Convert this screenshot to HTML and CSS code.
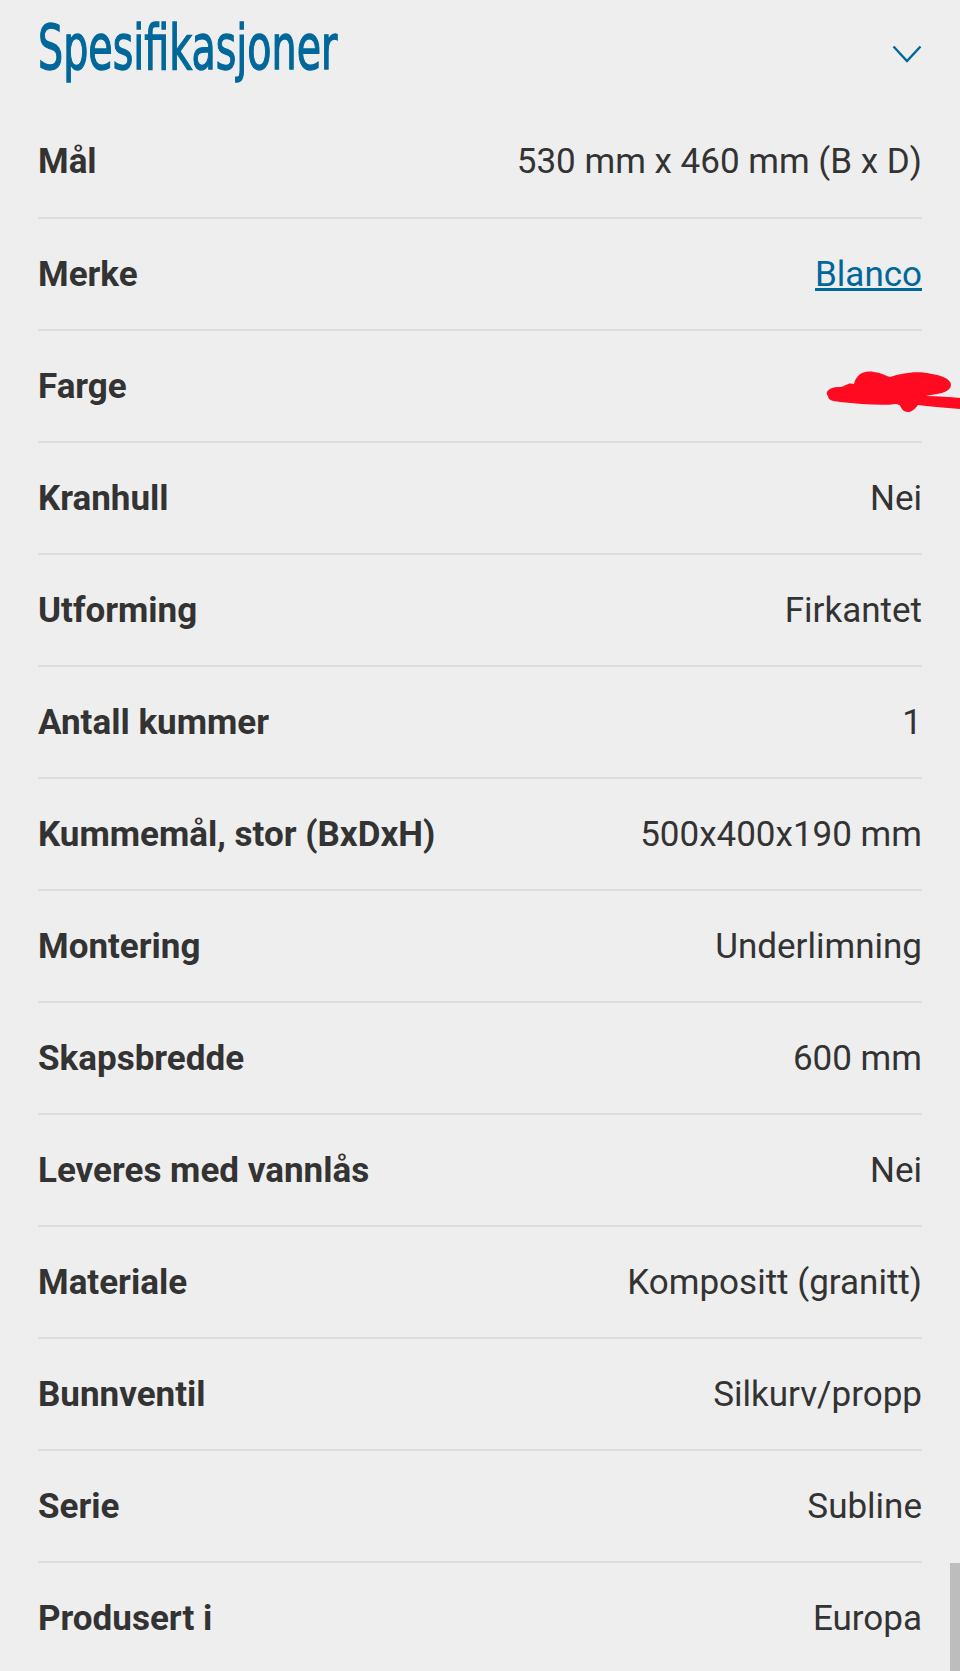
FILE: index.html
```html
<!DOCTYPE html>
<html lang="no">
<head>
    <meta charset="utf-8">
    <title>Spesifikasjoner</title>
    <link rel="stylesheet" href="styles.css">
</head>
<body>
    <div class="specs">
        <div class="specs-header">
            <h2 class="specs-title"><span>Spesifikasjoner</span></h2>
            <svg class="chevron" width="30" height="18" viewBox="0 0 30 18">
                <polyline points="1.5,1.5 15,16 28.5,1.5" fill="none" stroke="#00679a" stroke-width="2.4"/>
            </svg>
        </div>

        <dl class="spec-list">
            <div class="spec-row">
                <dt>Mål</dt>
                <dd>530 mm x 460 mm (B x D)</dd>
            </div>
            <div class="spec-row">
                <dt>Merke</dt>
                <dd><a href="#">Blanco</a></dd>
            </div>
            <div class="spec-row">
                <dt>Farge</dt>
                <dd class="hidden-value">
                    <svg class="scribble" width="140" height="52" viewBox="0 0 140 52">
                        <path d="M8 32 C4 28 10 22 20 23 C26 22 28 18 34 20 C36 12 42 6 54 8 C62 9 66 12 70 13 C80 10 96 6 112 10 C126 12 134 18 130 24 C126 30 114 30 106 32 C118 32 130 33 140 34 L140 45 C124 44 108 42 98 41 C94 46 90 50 84 47 C80 44 82 41 76 40 C62 42 40 40 20 38 C12 37 8 36 8 32 Z" fill="#ff0a20"/>
                    </svg>
                </dd>
            </div>
            <div class="spec-row">
                <dt>Kranhull</dt>
                <dd>Nei</dd>
            </div>
            <div class="spec-row">
                <dt>Utforming</dt>
                <dd>Firkantet</dd>
            </div>
            <div class="spec-row">
                <dt>Antall kummer</dt>
                <dd>1</dd>
            </div>
            <div class="spec-row">
                <dt>Kummemål, stor (BxDxH)</dt>
                <dd>500x400x190 mm</dd>
            </div>
            <div class="spec-row">
                <dt>Montering</dt>
                <dd>Underlimning</dd>
            </div>
            <div class="spec-row">
                <dt>Skapsbredde</dt>
                <dd>600 mm</dd>
            </div>
            <div class="spec-row">
                <dt>Leveres med vannlås</dt>
                <dd>Nei</dd>
            </div>
            <div class="spec-row">
                <dt>Materiale</dt>
                <dd>Kompositt (granitt)</dd>
            </div>
            <div class="spec-row">
                <dt>Bunnventil</dt>
                <dd>Silkurv/propp</dd>
            </div>
            <div class="spec-row">
                <dt>Serie</dt>
                <dd>Subline</dd>
            </div>
            <div class="spec-row">
                <dt>Produsert i</dt>
                <dd>Europa</dd>
            </div>
        </dl>
    </div>

    <div class="scroll-thumb"></div>
</body>
</html>
```

FILE: styles.css
```css
html, body {
    margin: 0;
    padding: 0;
    background: #eeeeee;
}
body {
    font-family: Roboto, "Liberation Sans", sans-serif;
    color: #333333;
    overflow: hidden;
}
.specs {
    padding: 0 38px;
}
.specs-header {
    display: flex;
    align-items: center;
    justify-content: space-between;
    height: 106px;
}
.specs-title {
    margin: 0;
    font-family: "Liberation Sans Narrow", "DejaVu Sans Condensed", "Liberation Sans", sans-serif;
    font-weight: normal;
    font-size: 62px;
    color: #00679a;
    line-height: 1;
    margin-top: -10px;
    -webkit-text-stroke: 1.3px #00679a;
}
.specs-title span {
    display: inline-block;
    transform: scaleX(0.71);
    transform-origin: left center;
}
.chevron {
    display: block;
    margin-top: 2px;
}
.spec-list {
    margin: 0;
}
.spec-row {
    display: flex;
    align-items: center;
    justify-content: space-between;
    height: 110px;
    border-top: 2px solid #dcdcdc;
}
.spec-row:first-child {
    border-top: none;
    height: 111px;
}
.spec-row dt {
    font-weight: bold;
    font-size: 35px;
}
.spec-row dd {
    margin: 0;
    font-size: 35px;
    text-align: right;
}
.spec-row a {
    color: #00679a;
}
.hidden-value {
    position: relative;
    width: 100px;
    height: 40px;
}
.scribble {
    position: absolute;
    left: -2px;
    top: -2px;
}
.scroll-thumb {
    position: absolute;
    right: 0;
    top: 1563px;
    width: 10px;
    height: 108px;
    background: #bdbdbd;
}
```
